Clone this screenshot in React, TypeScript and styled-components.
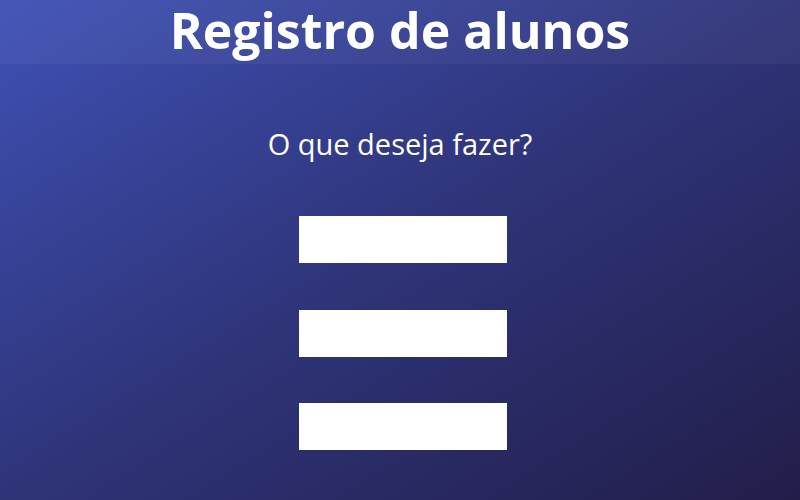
import React from 'react'
import styled, { createGlobalStyle } from 'styled-components'

const GlobalStyle = createGlobalStyle`
  html, body {
    margin: 0;
    padding: 0;
  }
  body {
    font-family: "Open Sans", "Liberation Sans", sans-serif;
    background: #2c2d6e;
  }
`

const Page = styled.div`
  width: 800px;
  height: 500px;
  display: flex;
  flex-direction: column;
  background: linear-gradient(to bottom right, #3f51b5 0%, #2f3479 50%, #221e4a 100%);
`

const Header = styled.header`
  height: 64px;
  display: flex;
  align-items: flex-start;
  justify-content: center;
  background: rgba(255, 255, 255, 0.04);
`

const Title = styled.h1`
  margin: 0;
  color: #ffffff;
  font-size: 50px;
  font-weight: 700;
  line-height: 60px;
`

const Main = styled.main`
  display: flex;
  flex-direction: column;
  align-items: center;
  padding-top: 64px;
`

const Question = styled.p`
  margin: 0;
  color: #ffffff;
  font-size: 29px;
  font-weight: 400;
  line-height: 32px;
`

const Options = styled.div`
  display: flex;
  flex-direction: column;
  gap: 46.5px;
  margin-top: 56px;
  padding-left: 6px;
`

const OptionButton = styled.button`
  width: 208px;
  height: 47px;
  background: #ffffff;
  border: 1px solid rgba(255, 255, 255, 0.75);
  padding: 0;
  cursor: pointer;
`

const App: React.FC = () => {
  return (
    <>
      <GlobalStyle />
      <Page>
        <Header>
          <Title>Registro de alunos</Title>
        </Header>
        <Main>
          <Question>O que deseja fazer?</Question>
          <Options>
            <OptionButton />
            <OptionButton />
            <OptionButton />
          </Options>
        </Main>
      </Page>
    </>
  )
}

export default App
